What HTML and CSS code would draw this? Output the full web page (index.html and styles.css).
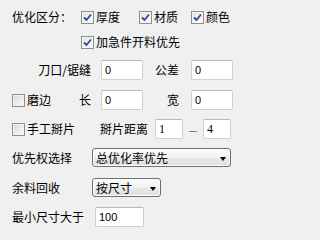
FILE: index.html
```html
<!DOCTYPE html>
<html>
<head>
<meta charset="utf-8">
<link rel="stylesheet" href="styles.css">
</head>
<body>
<div class="panel">
  <div class="row r1">
    <span class="lbl w69">优化区分：</span>
    <label class="chk w58"><span class="box on"><svg viewBox="0 0 9 9" width="9" height="9"><path d="M1 4.5 L3.5 7 L8 1.5" fill="none" stroke="#2b4a9c" stroke-width="1.8"/></svg></span>厚度</label>
    <label class="chk w52"><span class="box on"><svg viewBox="0 0 9 9" width="9" height="9"><path d="M1 4.5 L3.5 7 L8 1.5" fill="none" stroke="#2b4a9c" stroke-width="1.8"/></svg></span>材质</label>
    <label class="chk"><span class="box on"><svg viewBox="0 0 9 9" width="9" height="9"><path d="M1 4.5 L3.5 7 L8 1.5" fill="none" stroke="#2b4a9c" stroke-width="1.8"/></svg></span>颜色</label>
  </div>
  <div class="row r2">
    <span class="w69"></span>
    <label class="chk"><span class="box on"><svg viewBox="0 0 9 9" width="9" height="9"><path d="M1 4.5 L3.5 7 L8 1.5" fill="none" stroke="#2b4a9c" stroke-width="1.8"/></svg></span>加急件开料优先</label>
  </div>
  <div class="row r3">
    <span class="lbl right w79">刀口/锯缝</span>
    <span class="field w42 ml10">0</span>
    <span class="lbl right w36">公差</span>
    <span class="field w42 ml12">0</span>
  </div>
  <div class="row r4">
    <label class="chk w55"><span class="box"></span>磨边</label>
    <span class="lbl right w24">长</span>
    <span class="field w42 ml10">0</span>
    <span class="lbl right w36">宽</span>
    <span class="field w42 ml12">0</span>
  </div>
  <div class="row r5">
    <label class="chk w88"><span class="box"></span>手工掰片</label>
    <span class="lbl w48">掰片距离</span>
    <span class="field serif w28 ml7">1</span>
    <span class="dash">—</span>
    <span class="field serif w28">4</span>
  </div>
  <div class="row r6">
    <span class="lbl w80">优先权选择</span>
    <div class="combo w139"><span class="ctext">总优化率优先</span><span class="arrow"></span></div>
  </div>
  <div class="row r7">
    <span class="lbl w80">余料回收</span>
    <div class="combo w69"><span class="ctext">按尺寸</span><span class="arrow"></span></div>
  </div>
  <div class="row r8">
    <span class="lbl w83">最小尺寸大于</span>
    <span class="field w49">100</span>
  </div>
</div>
</body>
</html>
```

FILE: styles.css
```css
html, body {
  margin: 0;
  padding: 0;
  background: #f0f0f0;
}
.panel {
  width: 241px;
  height: 235px;
  display: flex;
  flex-direction: column;
  padding-top: 7px;
  box-sizing: border-box;
  font-family: "Noto Sans CJK SC", "Liberation Sans", sans-serif;
  font-size: 12px;
  color: #000;
}
.row {
  display: flex;
  align-items: center;
  padding-left: 12px;
  height: 20px;
  white-space: nowrap;
  line-height: 14px;
}
.r2 { margin-top: 5px; }
.r3 { margin-top: 8px; }
.r4 { margin-top: 10px; }
.r5 { margin-top: 9px; }
.r6 { margin-top: 9px; height: 19px; }
.r7 { margin-top: 11px; height: 19px; }
.r8 { margin-top: 10px; }

.lbl { display: inline-block; }
.right { text-align: right; }
.w24 { width: 24px; flex: none; }
.w28 { width: 28px; flex: none; }
.w36 { width: 36px; flex: none; }
.w42 { width: 42px; flex: none; }
.w48 { width: 48px; flex: none; }
.w49 { width: 49px; flex: none; }
.w52 { width: 52px; flex: none; }
.w55 { width: 55px; flex: none; }
.w58 { width: 58px; flex: none; }
.w69 { width: 69px; flex: none; }
.w79 { width: 79px; flex: none; }
.w80 { width: 80px; flex: none; }
.w83 { width: 83px; flex: none; }
.w88 { width: 88px; flex: none; }
.w139 { width: 139px; flex: none; }
.ml7 { margin-left: 7px; }
.ml10 { margin-left: 10px; }
.ml12 { margin-left: 12px; }

.chk {
  display: flex;
  align-items: center;
}
.box {
  width: 13px;
  height: 13px;
  box-sizing: border-box;
  border: 1px solid #8e8f8f;
  background: linear-gradient(135deg, #d6d6d6 0%, #eeeeee 60%, #fbfbfb 100%);
  box-shadow: inset 0 0 0 1px #f4f4f4;
  margin-right: 2px;
  display: flex;
  align-items: center;
  justify-content: center;
  flex: none;
}
.box.on {
  background: linear-gradient(135deg, #e2e2e2 0%, #f2f2f2 60%, #fdfdfd 100%);
}

.field {
  display: flex;
  align-items: center;
  height: 20px;
  box-sizing: border-box;
  border: 1px solid #cfcfcf;
  border-top-color: #b9b9b9;
  border-radius: 2px;
  background: #fff;
  padding-left: 3px;
  font-family: "Liberation Sans", sans-serif;
  font-size: 11px;
  flex: none;
}
.field.serif {
  font-family: "Liberation Serif", serif;
  font-size: 12px;
}
.dash {
  width: 8px;
  margin: 0 6px;
  font-family: "Liberation Sans", sans-serif;
  font-size: 8px;
  line-height: 8px;
  padding-top: 4px;
  overflow: hidden;
  flex: none;
}

.combo {
  display: flex;
  align-items: center;
  justify-content: space-between;
  height: 19px;
  box-sizing: border-box;
  border: 1px solid #707070;
  border-radius: 3px;
  background: linear-gradient(#fafafa 0%, #f2f2f2 50%, #e8e8e8 51%, #e0e0e0 100%);
  box-shadow: inset 0 0 0 1px #fdfdfd;
  padding: 0 4px 0 3px;
  flex: none;
}
.arrow {
  width: 0;
  height: 0;
  border-left: 3.5px solid transparent;
  border-right: 3.5px solid transparent;
  border-top: 4px solid #000;
  margin-top: 2px;
}
```
